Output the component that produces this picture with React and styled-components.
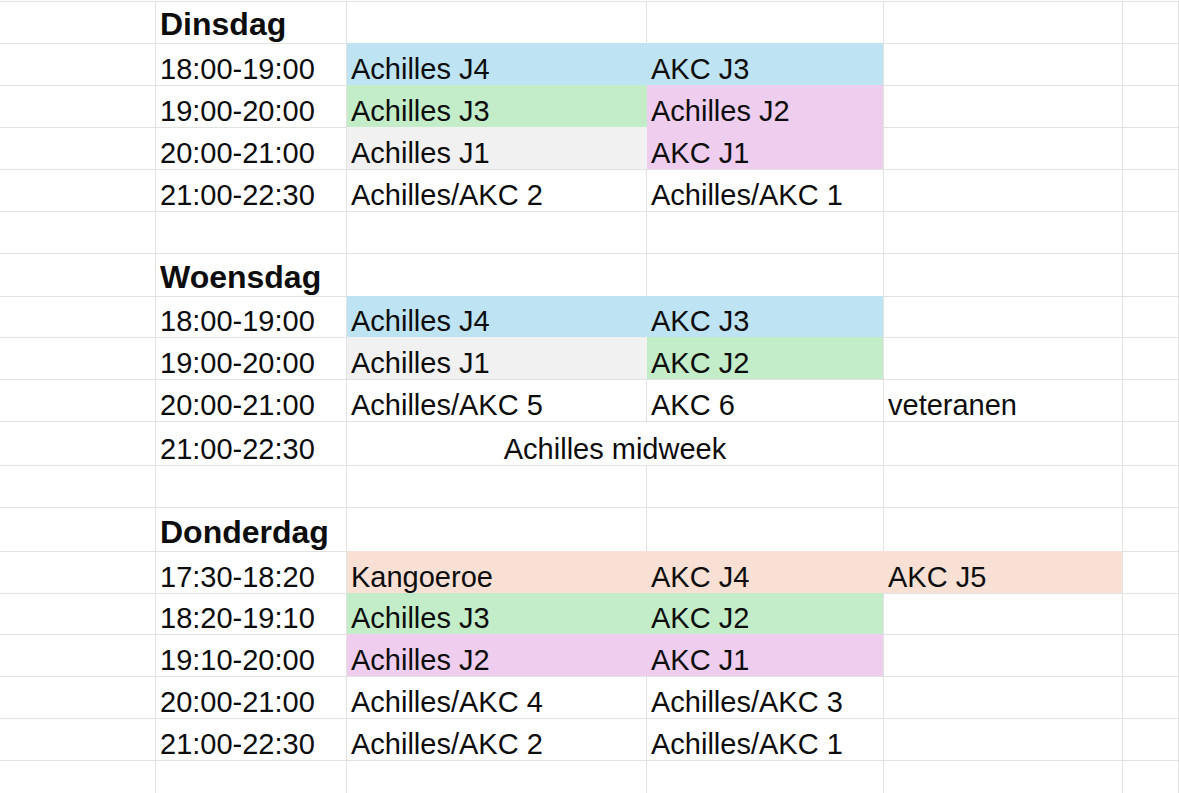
import React from 'react'
import styled, { createGlobalStyle } from 'styled-components'

const GlobalStyle = createGlobalStyle`
    html, body {
        margin: 0;
        padding: 0;
        background: #fff;
        overflow: hidden;
    }
`

const FILLS = {
    blue: '#bee3f2',
    green: '#c3edc8',
    pink: '#efcdee',
    gray: '#f1f1f1',
    peach: '#f9e0d4',
}

const LINE = '#e2e2e2'

const COLS = [156, 191, 300, 237, 239]
const ROWS = [42, 42, 42, 42, 42, 42, 43, 41, 42, 42, 44, 42, 44, 42, 41, 42, 42, 42, 40]

// cells keyed by column index
const b = (t) => ({ t, bold: true })
const c = (t, fill) => ({ t, fill })

const rows = [
    { 1: b('Dinsdag') },
    { 1: '18:00-19:00', 2: c('Achilles J4', 'blue'), 3: c('AKC J3', 'blue') },
    { 1: '19:00-20:00', 2: c('Achilles J3', 'green'), 3: c('Achilles J2', 'pink') },
    { 1: '20:00-21:00', 2: c('Achilles J1', 'gray'), 3: c('AKC J1', 'pink') },
    { 1: '21:00-22:30', 2: 'Achilles/AKC 2', 3: 'Achilles/AKC 1' },
    {},
    { 1: b('Woensdag') },
    { 1: '18:00-19:00', 2: c('Achilles J4', 'blue'), 3: c('AKC J3', 'blue') },
    { 1: '19:00-20:00', 2: c('Achilles J1', 'gray'), 3: c('AKC J2', 'green') },
    { 1: '20:00-21:00', 2: 'Achilles/AKC 5', 3: 'AKC 6', 4: 'veteranen' },
    { 1: '21:00-22:30', 2: { t: 'Achilles midweek', span: 2, center: true } },
    {},
    { 1: b('Donderdag') },
    { 1: '17:30-18:20', 2: c('Kangoeroe', 'peach'), 3: c('AKC J4', 'peach'), 4: c('AKC J5', 'peach') },
    { 1: '18:20-19:10', 2: c('Achilles J3', 'green'), 3: c('AKC J2', 'green') },
    { 1: '19:10-20:00', 2: c('Achilles J2', 'pink'), 3: c('AKC J1', 'pink') },
    { 1: '20:00-21:00', 2: 'Achilles/AKC 4', 3: 'Achilles/AKC 3' },
    { 1: '21:00-22:30', 2: 'Achilles/AKC 2', 3: 'Achilles/AKC 1' },
    {},
]

const norm = (v) => (v == null ? {} : typeof v === 'string' ? { t: v } : v)
const fillAt = (r, col) => (rows[r] ? norm(rows[r][col]).fill : undefined)

export default function App() {
    const cells = []
    rows.forEach((row, r) => {
        let col = 0
        while (col < 6) {
            const cell = norm(row[col])
            const span = cell.span || 1
            const next = col + span
            cells.push(
                <Cell
                    key={`${r}-${col}`}
                    $span={span}
                    $fill={cell.fill}
                    $bold={cell.bold}
                    $center={cell.center}
                    $hideRight={!!cell.fill && !!fillAt(r, next)}
                    $hideBottom={!!cell.fill && !!fillAt(r + 1, col)}
                >
                    {cell.t}
                </Cell>
            )
            col = next
        }
    })

    return (
        <>
            <GlobalStyle />
            <Sheet>{cells}</Sheet>
        </>
    )
}

const Sheet = styled.div`
    display: grid;
    grid-template-columns: ${COLS.map((w) => w + 'px').join(' ')} 1fr;
    grid-template-rows: ${ROWS.map((h) => h + 'px').join(' ')};
    width: 1179px;
    height: 793px;
    border-top: 1px solid ${LINE};
    margin-top: 1px;
    box-sizing: border-box;
    font-family: "Liberation Sans", Arial, sans-serif;
    color: #0d0d0d;
    overflow: hidden;
`

const Cell = styled.div`
    grid-column: span ${(p) => p.$span};
    box-sizing: border-box;
    display: flex;
    align-items: flex-end;
    justify-content: ${(p) => (p.$center ? 'center' : 'flex-start')};
    padding: 0 4px ${(p) => (p.$bold ? '4px' : '1px')};
    white-space: nowrap;
    font-size: ${(p) => (p.$bold ? '32px' : '29px')};
    font-weight: ${(p) => (p.$bold ? 700 : 400)};
    line-height: 29px;
    background: ${(p) => (p.$fill ? FILLS[p.$fill] : '#fff')};
    border-right: 1px solid ${(p) => (p.$hideRight ? 'transparent' : LINE)};
    border-bottom: 1px solid ${(p) => (p.$hideBottom ? 'transparent' : LINE)};
    margin-top: ${(p) => (p.$fill ? '-1px' : '0')};
`
